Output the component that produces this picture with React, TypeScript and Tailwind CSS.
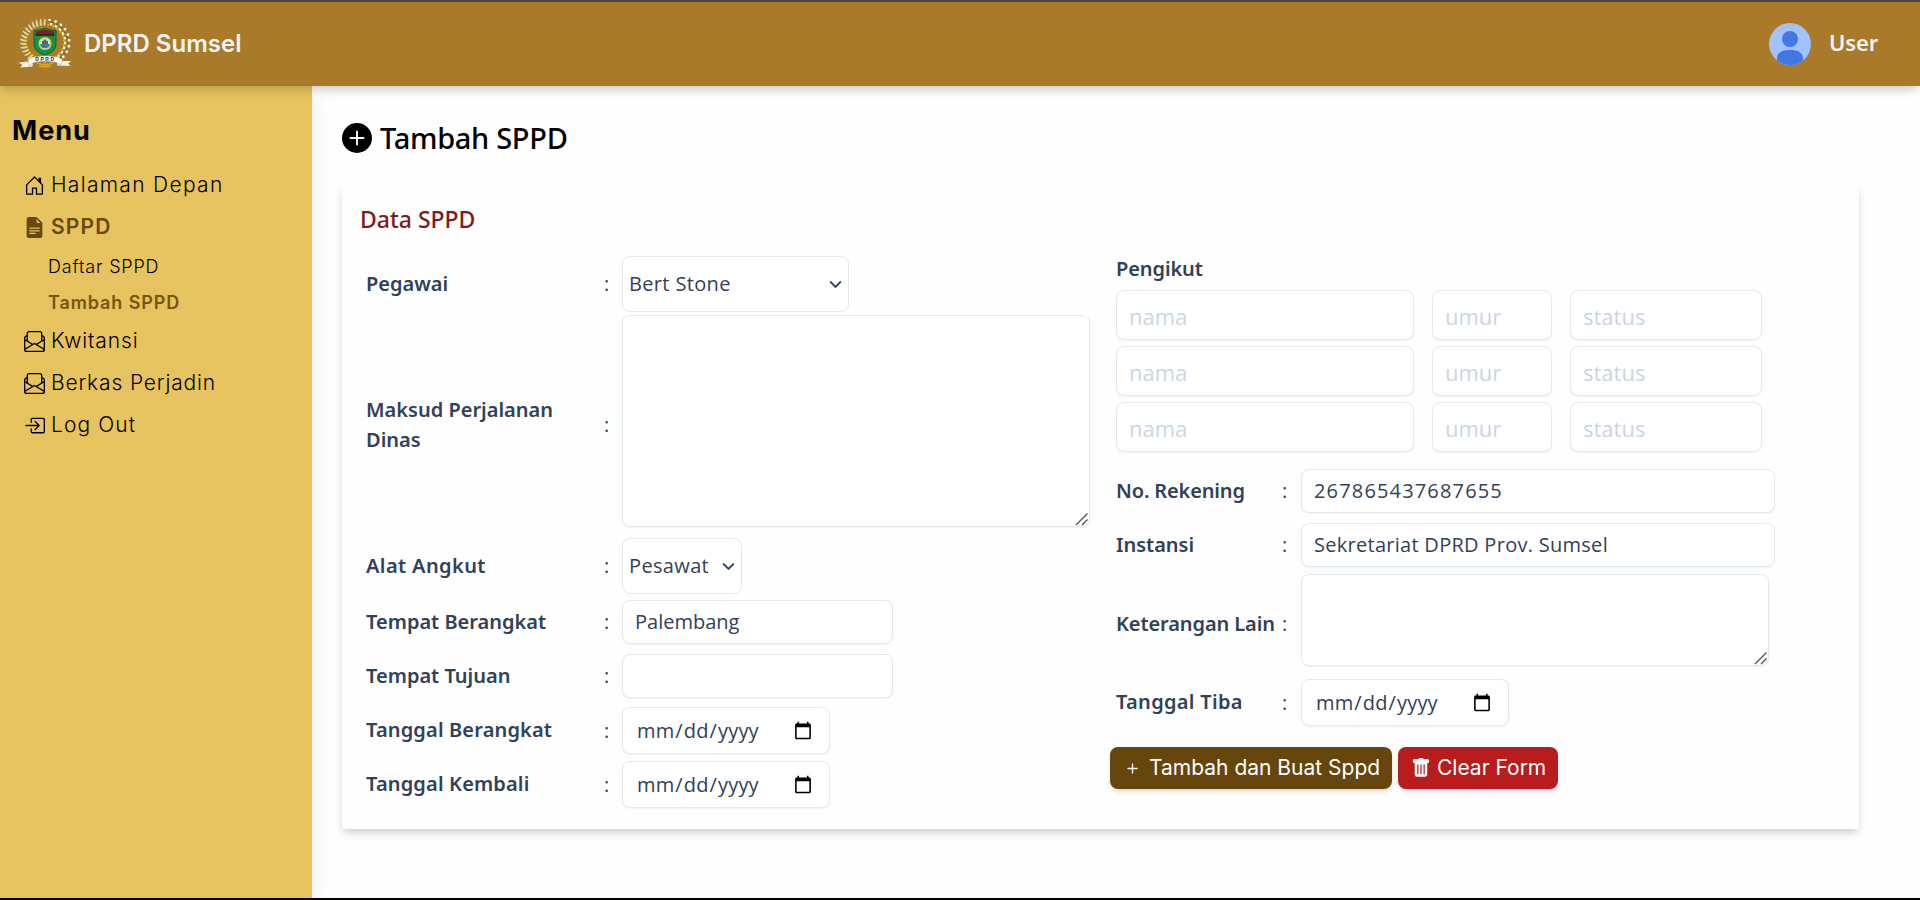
import type { ReactNode } from "react";
import { ChevronDown } from "lucide-react";
import {
  BsBoxArrowInRight,
  BsEnvelopePaper,
  BsFileEarmarkTextFill,
  BsHouseDoor,
  BsPlus,
  BsPlusCircleFill,
  BsTrashFill,
} from "react-icons/bs";

const FIELD =
  "block rounded-lg border border-slate-200 bg-white font-['Open_Sans',sans-serif] text-[20px] text-slate-700 shadow-xs outline-none placeholder:text-slate-300";

const range = (n: number) => Array.from({ length: n }, (_, i) => i);

function Logo() {
  return (
    <svg viewBox="0 0 54 50" className="h-[50px] w-[54px] shrink-0">
      {range(15).map((i) => {
        const deg = 122 + i * 10.5;
        const a = (deg * Math.PI) / 180;
        const x = 27 + 22 * Math.cos(a);
        const y = 23 + 20.5 * Math.sin(a);
        return (
          <g key={i} transform={`translate(${x} ${y}) rotate(${deg + 15})`}>
            <ellipse cx="0" cy="0" rx="3.8" ry="1.3" fill="#e3d9a4" stroke="#7c6a2c" strokeWidth=".5" />
            <ellipse cx="-2.4" cy=".6" rx="1.6" ry=".9" fill={i < 8 ? "#efd93c" : "#d8d3b4"} />
          </g>
        );
      })}
      {range(9).map((i) => {
        const deg = -76 + i * 15;
        const a = (deg * Math.PI) / 180;
        const x = 27 + 22 * Math.cos(a);
        const y = 23 + 20.5 * Math.sin(a);
        return (
          <g key={i} transform={`translate(${x} ${y}) rotate(${deg})`}>
            <circle cx="2.200" cy="-1.300" r="1.400" fill="#f4f1e2" />
            <circle cx="-1.800" cy="1.300" r="1.400" fill="#f4f1e2" />
            <circle cx=".3" cy="1.200" r=".9" fill="#6f5728" />
            <circle cx="-3" cy="-1.300" r="1" fill="#e5b92c" />
          </g>
        );
      })}
      <path d="M16 11.500 Q21.500 11.200 27 9.300 Q32.500 11.200 38 11.500 V25 Q38 32.500 27 36.500 Q16 32.500 16 25 Z" fill="#0f9347" stroke="#0b5a2d" strokeWidth=".9" />
      <path d="M18 12.500 L27 10.800 L36 12.500 V17 H18 Z" fill="#7c2019" />
      <path d="M17.500 15.800 H36.500" stroke="#33201a" strokeWidth="1.300" />
      <circle cx="27" cy="24.500" r="6.600" fill="#e6c33d" />
      <circle cx="27" cy="24.500" r="5.200" fill="#dfe9ea" />
      <path d="M21.900 25 H32.100 A5.200 5.200 0 0 1 21.900 25 Z" fill="#2f7fb0" />
      <path d="M24 25 V22 H25.500 V20.500 H28.500 V22 H30 V25 Z" fill="#7a5b4a" />
      <path d="M19 44 Q27 47.500 35 44 M21 47 Q27 48.500 33 47 M27 43 V48" stroke="#d9a824" strokeWidth="1.400" fill="none" />
      <path d="M.500 43.500 L10 42.500 L15 44.500 L14.500 47.500 L2 48.500 L4.500 46 Z M53.500 42 L44 42 L39 43.500 L39.500 46.500 L52.500 47 L50 44.500 Z" fill="#f3f1ea" />
      <path d="M10 41 Q13 37.500 18.500 37.700 Q27 36 35.500 37.500 Q40.500 37 44.500 40.500 L43 46 Q39 42.500 35 43 Q27 41.500 19 43 Q15 42.800 11.500 46.500 Z" fill="#fffdf6" stroke="#a08c5c" strokeWidth=".4" />
      <text x="27.500" y="42" textAnchor="middle" fontSize="5" fontWeight="700" letterSpacing="1.600" fontFamily="Liberation Sans, sans-serif" fill="#2b2b2b">DPRD</text>
    </svg>
  );
}

function Avatar() {
  return (
    <svg viewBox="0 0 42 42" className="size-[42px]">
      <defs>
        <clipPath id="face">
          <circle cx="21" cy="21" r="21" />
        </clipPath>
      </defs>
      <circle cx="21" cy="21" r="21" fill="#a1c2fd" />
      <g clipPath="url(#face)" fill="#4276e2">
        <circle cx="21" cy="16" r="8" />
        <path d="M8 42 V35.500 C8 29.500 13 27 21 27 C29 27 34 29.500 34 35.500 V42 Z" />
      </g>
    </svg>
  );
}

function MenuItem({ icon, label, className = "", track = "" }: { icon: ReactNode; label: string; className?: string; track?: string }) {
  return (
    <a className={`flex h-[42px] items-center gap-[6px] pl-[24px] text-[21px] ${className}`}>
      {icon}
      <span className={track}>{label}</span>
    </a>
  );
}

function Row({ label, side, height, children }: { label: ReactNode; side: "left" | "right"; height: string; children: ReactNode }) {
  const cols = side === "left" ? "grid-cols-[238px_18px_1fr]" : "grid-cols-[166px_19px_1fr]";
  return (
    <div className={`grid ${cols} ${height}`}>
      <label className="self-center text-[20px] leading-[30px] font-semibold whitespace-nowrap text-slate-700">{label}</label>
      <span className="self-center font-['Open_Sans',sans-serif] text-[20px] leading-[30px] text-slate-700">:</span>
      {children}
    </div>
  );
}

function Select({ value, className }: { value: string; className: string }) {
  return (
    <div className={`relative h-[56px] ${className}`}>
      <select
        defaultValue={value}
        className="block size-full appearance-none rounded-lg border border-gray-200 bg-white pl-[6px] font-['Open_Sans',sans-serif] text-[20px] tracking-[0.35px] text-slate-700 outline-none"
      >
        <option>{value}</option>
      </select>
      <ChevronDown className="pointer-events-none absolute top-[19px] right-[4px] size-[19px] text-slate-700" strokeWidth={2.6} />
    </div>
  );
}

function TextArea({ className }: { className: string }) {
  return (
    <div className={`relative ${className}`}>
      <textarea className={`${FIELD} size-full resize-none`} />
      <svg viewBox="0 0 14 14" className="pointer-events-none absolute right-[1px] bottom-[1px] size-[14px]" stroke="#555" strokeWidth="1.4">
        <path d="M1 13 L12.500 1.500 M7 13 L12.500 7.500" />
      </svg>
    </div>
  );
}

export default function App() {
  return (
    <div className="flex h-[900px] w-[1920px] flex-col overflow-hidden border-t-2 border-b-2 border-t-[#474747] border-b-black bg-[#fefefe] font-['Noto_Sans',sans-serif]">
      <header className="z-10 flex h-[84px] shrink-0 items-center justify-between bg-[#a97a29] pr-[42px] pl-[18px] shadow-[0_5px_10px_-2px_rgba(0,0,0,0.22)]">
        <div className="flex items-center gap-[12px]">
          <Logo />
          <span className="font-['Inter',sans-serif] text-[24px] font-semibold text-gray-100">DPRD Sumsel</span>
        </div>
        <div className="flex items-center gap-[18px]">
          <Avatar />
          <span className="mt-[-4px] text-[22px] leading-[30px] font-semibold tracking-[-0.2px] text-gray-100">User</span>
        </div>
      </header>

      <div className="flex min-h-0 flex-1">
        <aside className="w-[312px] shrink-0 bg-[#e6c35f] font-['Inter',sans-serif] text-black shadow-[0_6px_24px_rgba(0,0,0,0.08)]">
          <h2 className="mt-[25px] pl-[12px] text-[27px] leading-[40px] font-bold tracking-[1px]">Menu</h2>
          <nav className="mt-[13px]">
            <MenuItem icon={<BsHouseDoor className="size-[21px]" />} label="Halaman Depan" className="font-light" track="tracking-[1.3px]" />
            <MenuItem icon={<BsFileEarmarkTextFill className="size-[21px]" />} label="SPPD" className="font-semibold text-[#67480d]" track="tracking-[1.2px]" />
            <div className="flex flex-col pl-[48px] text-[18px]">
              <a className="flex h-[36px] items-center font-light tracking-[0.8px]">Daftar SPPD</a>
              <a className="flex h-[36px] items-center font-semibold tracking-[0.9px] text-[#78550f]">Tambah SPPD</a>
            </div>
            <MenuItem icon={<BsEnvelopePaper className="size-[21px]" />} label="Kwitansi" className="font-light" track="tracking-[0.9px]" />
            <MenuItem icon={<BsEnvelopePaper className="size-[21px]" />} label="Berkas Perjadin" className="font-light" track="tracking-[0.85px]" />
            <MenuItem icon={<BsBoxArrowInRight className="size-[21px]" />} label="Log Out" className="font-light" track="tracking-[1.1px]" />
          </nav>
        </aside>

        <main className="flex-1 pl-[30px]">
          <h1 className="mt-[31px] flex h-[42px] items-center gap-[8px] text-[29px] font-medium tracking-[-0.3px] text-black">
            <BsPlusCircleFill className="size-[30px]" />
            Tambah SPPD
          </h1>

          <section className="mt-[26px] h-[644px] w-[1517px] bg-[#fefefe] shadow-[0_5px_9px_-2px_rgba(0,0,0,0.22)]">
            <h2 className="pt-[18px] pl-[18px] text-[23px] leading-[32px] font-medium text-red-900">Data SPPD</h2>
            <div className="flex pt-[21px] pl-[24px]">
              <div className="w-[750px]">
                <Row side="left" height="h-[56px]" label="Pegawai">
                  <Select value="Bert Stone" className="w-[227px]" />
                </Row>
                <Row side="left" height="mt-[3px] h-[220px]" label={<>Maksud Perjalanan<br />Dinas</>}>
                  <TextArea className="h-[212px] w-[468px]" />
                </Row>
                <Row side="left" height="mt-[3px] h-[56px]" label={<span className="tracking-[0.4px]">Alat Angkut</span>}>
                  <Select value="Pesawat" className="w-[120px]" />
                </Row>
                <Row side="left" height="mt-[6px] h-[44px]" label="Tempat Berangkat">
                  <input defaultValue="Palembang" className={`${FIELD} w-[271px] px-[12px]`} />
                </Row>
                <Row side="left" height="mt-[10px] h-[44px]" label="Tempat Tujuan">
                  <input className={`${FIELD} w-[271px] px-[12px]`} />
                </Row>
                <Row side="left" height="mt-[9px] h-[47px]" label={<span className="relative -top-px tracking-[0.15px]">Tanggal Berangkat</span>}>
                  <input type="date" className={`${FIELD} w-[208px] pr-[14px] pl-[13px] tracking-[0.15px]`} />
                </Row>
                <Row side="left" height="mt-[7px] h-[47px]" label={<span className="relative -top-px tracking-[0.15px]">Tanggal Kembali</span>}>
                  <input type="date" className={`${FIELD} w-[208px] pr-[14px] pl-[13px] tracking-[0.15px]`} />
                </Row>
              </div>

              <div>
                <p className="mt-[-3px] text-[20px] leading-[32px] font-semibold tracking-[-0.1px] text-slate-700">Pengikut</p>
                <div className="mt-[5px] flex flex-col gap-[6px]">
                  {range(3).map((i) => (
                    <div key={i} className="flex gap-[18px]">
                      <input placeholder="nama" className={`${FIELD} h-[50px] w-[298px] px-[12px] pt-[2px] text-[22px]!`} />
                      <input placeholder="umur" className={`${FIELD} h-[50px] w-[120px] px-[12px] pt-[2px] text-[22px]!`} />
                      <input placeholder="status" className={`${FIELD} h-[50px] w-[192px] px-[12px] pt-[2px] text-[22px]!`} />
                    </div>
                  ))}
                </div>
                <Row side="right" height="mt-[17px] h-[44px]" label={<span className="tracking-[-0.15px]">No. Rekening</span>}>
                  <input defaultValue="267865437687655" className={`${FIELD} w-[474px] px-[12px] tracking-[1.16px]`} />
                </Row>
                <Row side="right" height="mt-[10px] h-[44px]" label="Instansi">
                  <input defaultValue="Sekretariat DPRD Prov. Sumsel" className={`${FIELD} w-[474px] px-[12px] tracking-[0.28px]`} />
                </Row>
                <Row side="right" height="mt-[7px] h-[100px]" label={<span className="tracking-[-0.1px]">Keterangan Lain</span>}>
                  <TextArea className="h-[92px] w-[468px]" />
                </Row>
                <Row side="right" height="mt-[5px] h-[47px]" label={<span className="relative -top-px tracking-[0.3px]">Tanggal Tiba</span>}>
                  <input type="date" className={`${FIELD} w-[208px] pr-[14px] pl-[13px] tracking-[0.15px]`} />
                </Row>
                <div className="mt-[21px] ml-[-6px] flex gap-[6px] font-['Inter',sans-serif] text-[21px] text-white">
                  <button className="flex h-[42px] w-[282px] items-center gap-[6px] rounded-lg bg-[#66460d] pl-[12px] whitespace-nowrap shadow-md">
                    <BsPlus className="size-[21px]" />
                    Tambah dan Buat Sppd
                  </button>
                  <button className="flex h-[42px] w-[160px] items-center gap-[6px] rounded-lg bg-[#b91c1c] pl-[13px] whitespace-nowrap shadow-md">
                    <BsTrashFill className="size-[20px]" />
                    Clear Form
                  </button>
                </div>
              </div>
            </div>
          </section>
        </main>
      </div>
    </div>
  );
}
